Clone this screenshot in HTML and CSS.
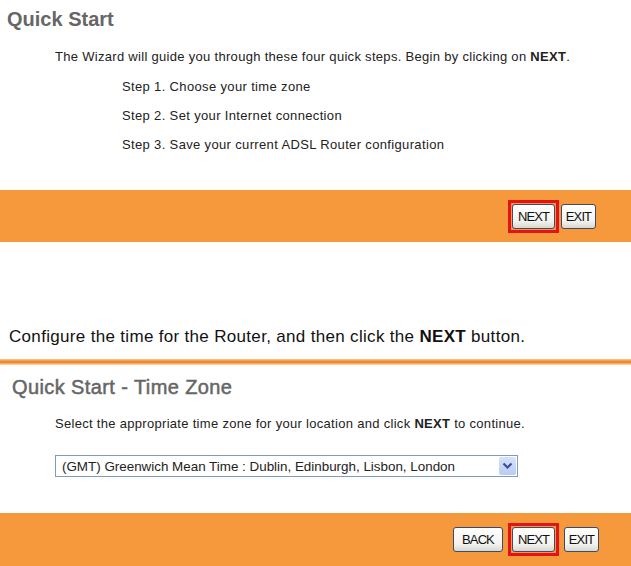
FILE: index.html
```html
<!DOCTYPE html>
<html lang="en">
  <head>
    <meta charset="UTF-8" />
    <title>Quick Start</title>
    <link rel="stylesheet" href="styles.css">
  </head>
  <body>
    <div class="wizard">
      <h1 class="title">Quick Start</h1>
      <p class="intro">The Wizard will guide you through these four quick steps. Begin by clicking on <b>NEXT</b>.</p>
      <ul class="steps">
        <li>Step 1. Choose your time zone</li>
        <li>Step 2. Set your Internet connection</li>
        <li>Step 3. Save your current ADSL Router configuration</li>
      </ul>
      <div class="bar bar-top">
        <span class="hl"><button class="btn btn-next">NEXT</button></span>
        <button class="btn btn-exit">EXIT</button>
      </div>
    </div>

    <p class="caption">Configure the time for the Router, and then click the <b>NEXT</b> button.</p>
    <div class="rule"></div>

    <div class="wizard">
      <h2 class="title title-2">Quick Start - Time Zone</h2>
      <p class="intro intro-2">Select the appropriate time zone for your location and click <b>NEXT</b> to continue.</p>
      <div class="zone">
        <span class="zone-text">(GMT) Greenwich Mean Time : Dublin, Edinburgh, Lisbon, London</span>
        <span class="zone-arrow">
          <svg width="11" height="8" viewBox="0 0 11 8"><path d="M1.5 1.5 L5.5 5.5 L9.5 1.5" fill="none" stroke="#3b4f8c" stroke-width="2.2"/></svg>
        </span>
      </div>
      <div class="bar bar-bottom">
        <button class="btn btn-back">BACK</button>
        <span class="hl"><button class="btn btn-next">NEXT</button></span>
        <button class="btn btn-exit">EXIT</button>
      </div>
    </div>
  </body>
</html>
```

FILE: styles.css
```css
body {
  margin: 0;
  padding: 0;
  background: #fff;
  font-family: "Liberation Sans", Arial, sans-serif;
  color: #222;
}

.title {
  margin: 0;
  padding: 8px 0 0 7px;
  font-size: 20px;
  line-height: 22px;
  font-weight: bold;
  color: #666;
}

.intro {
  margin: 19px 0 0 55px;
  font-size: 13px;
  line-height: 16px;
  letter-spacing: 0.3px;
}

.steps {
  list-style: none;
  margin: 7px 0 0 122px;
  padding: 0;
  font-size: 13px;
  line-height: 29px;
  letter-spacing: 0.35px;
}

.bar {
  background: #f6993c;
  display: flex;
  justify-content: flex-end;
  align-items: center;
  gap: 2px;
}
.bar-top {
  margin-top: 31px;
  height: 52px;
  padding-right: 35px;
}
.bar-bottom {
  margin-top: 36px;
  height: 53px;
  padding-right: 32px;
  gap: 5px;
}

.hl {
  display: inline-flex;
  border: 3px solid #e3131b;
  padding: 1px;
}

.btn {
  font-family: "Liberation Sans", Arial, sans-serif;
  font-size: 13px;
  letter-spacing: -0.9px;
  color: #111;
  height: 25px;
  padding: 0;
  text-align: center;
  border: 1px solid #3d4a6b;
  border-radius: 3px;
  background: linear-gradient(#ffffff, #f2f2ef 70%, #d8d8d2);
}
.btn-back {
  width: 50px;
}
.btn-next {
  width: 43px;
}
.btn-exit {
  width: 35px;
}

.caption {
  margin: 85px 0 0 9px;
  font-size: 17px;
  line-height: 20px;
  letter-spacing: 0.32px;
  color: #111;
}

.rule {
  margin-top: 12px;
  height: 6px;
  background: linear-gradient(#f7c996, #ef8a2e 40%, #ef8a2e 60%, #fbe3c9);
}

.title-2 {
  padding: 0 0 0 12px;
  margin-top: 11px;
  font-weight: normal;
  letter-spacing: 0.4px;
  -webkit-text-stroke: 0.5px #666;
}

.intro-2 {
  margin-top: 18px;
}

.zone {
  margin: 23px 0 0 55px;
  width: 461px;
  height: 20px;
  border: 1px solid #7f9db9;
  display: flex;
  align-items: center;
  justify-content: space-between;
  font-size: 13.4px;
  box-sizing: content-box;
}
.zone-text {
  padding-left: 6px;
}
.zone-arrow {
  width: 17px;
  height: 18px;
  margin-right: 1px;
  border-radius: 2px;
  background: linear-gradient(#d6e2fb, #b8cbf2);
  display: flex;
  align-items: center;
  justify-content: center;
}
```
